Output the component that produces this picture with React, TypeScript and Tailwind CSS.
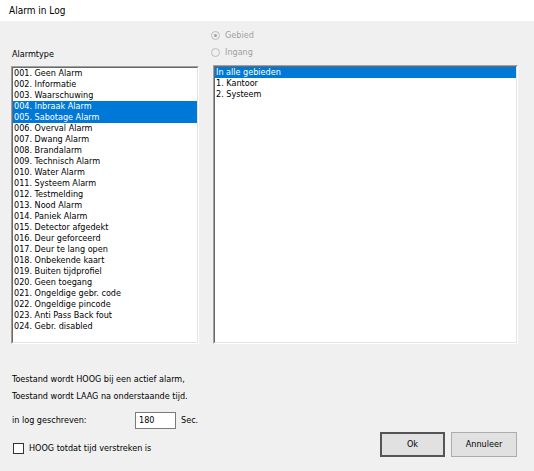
const ALARMS = [
  '001. Geen Alarm',
  '002. Informatie',
  '003. Waarschuwing',
  '004. Inbraak Alarm',
  '005. Sabotage Alarm',
  '006. Overval Alarm',
  '007. Dwang Alarm',
  '008. Brandalarm',
  '009. Technisch Alarm',
  '010. Water Alarm',
  '011. Systeem Alarm',
  '012. Testmelding',
  '013. Nood Alarm',
  '014. Paniek Alarm',
  '015. Detector afgedekt',
  '016. Deur geforceerd',
  '017. Deur te lang open',
  '018. Onbekende kaart',
  '019. Buiten tijdprofiel',
  '020. Geen toegang',
  '021. Ongeldige gebr. code',
  '022. Ongeldige pincode',
  '023. Anti Pass Back fout',
  '024. Gebr. disabled',
]

const SELECTED = [3, 4]

const AREAS = ['In alle gebieden', '1. Kantoor', '2. Systeem']

export default function App() {
  return (
    <div className="w-[534px] h-[471px] bg-[#f0f0f0] text-black text-[9px] overflow-hidden" style={{ fontFamily: '"DejaVu Sans Condensed", "Liberation Sans", sans-serif' }}>
      <div className="h-[21px] bg-white pl-[9px] flex items-center text-[10px]">Alarm in Log</div>

      <div className="flex pl-[11px]">
        <div className="w-[188px] flex flex-col pt-[27px]">
          <div className="h-[12px] leading-[12px] pl-[1px]">Alarmtype</div>
          <ListBox className="mt-[6px] h-[278px]">
            {ALARMS.map((a, i) => (
              <Row key={a} selected={SELECTED.includes(i)}>{a}</Row>
            ))}
          </ListBox>
        </div>

        <div className="w-[305px] ml-[14px] flex flex-col pt-[6px]">
          <Radio checked label="Gebied" />
          <Radio label="Ingang" />
          <ListBox className="mt-[4px] h-[279px]">
            {AREAS.map((a, i) => (
              <Row key={a} selected={i === 0}>{a}</Row>
            ))}
          </ListBox>
        </div>
      </div>

      <div className="pl-[12px] pr-[17px]">
        <div className="mt-[27px] h-[17px] leading-[17px]">Toestand wordt HOOG bij een actief alarm,</div>
        <div className="h-[17px] leading-[17px]">Toestand wordt LAAG na onderstaande tijd.</div>
        <div className="mt-[7px] h-[17px] flex items-center">
          <span className="w-[123px]">in log geschreven:</span>
          <div className="w-[41px] h-[17px] bg-white border border-[#7a7a7a] pl-[3px] leading-[15px]">180</div>
          <span className="ml-[5px]">Sec.</span>
        </div>
        <div className="mt-[3px] h-[25px] flex justify-between">
          <label className="self-end mb-[3px] ml-[1px] flex items-center gap-[5px] h-[11px]">
            <span className="w-[11px] h-[11px] bg-white border border-[#333]" />
            <span className="leading-[11px]">HOOG totdat tijd verstreken is</span>
          </label>
          <div className="flex gap-[6px]">
            <button className="w-[65px] h-[25px] bg-[#e1e1e1] border-2 border-[#555] text-[9px]">Ok</button>
            <button className="w-[66px] h-[25px] bg-[#e1e1e1] border border-[#adadad] text-[9px]">Annuleer</button>
          </div>
        </div>
      </div>
    </div>
  )
}

function ListBox({ className, children }: { className: string; children: React.ReactNode }) {
  return (
    <div className={`border border-t-[#a0a0a0] border-l-[#a0a0a0] border-b-white border-r-white ${className}`}>
      <div className="h-full bg-white border border-t-[#696969] border-l-[#696969] border-b-[#e3e3e3] border-r-[#e3e3e3] overflow-hidden">
        {children}
      </div>
    </div>
  )
}

function Row({ selected, children }: { selected?: boolean; children: React.ReactNode }) {
  return (
    <div className={`h-[11px] leading-[11px] pl-[1px] whitespace-nowrap ${selected ? 'bg-[#0078d7] text-white' : ''}`}>
      {children}
    </div>
  )
}

function Radio({ checked, label }: { checked?: boolean; label: string }) {
  return (
    <div className="h-[17px] flex items-center -ml-[2px] text-[#a0a0a0]">
      <span className="w-[9px] h-[9px] rounded-full border border-[#bcbcbc] bg-[#f0f0f0] flex items-center justify-center">
        {checked && <span className="w-[3px] h-[3px] rounded-full bg-[#a0a0a0]" />}
      </span>
      <span className="ml-[5px]">{label}</span>
    </div>
  )
}
